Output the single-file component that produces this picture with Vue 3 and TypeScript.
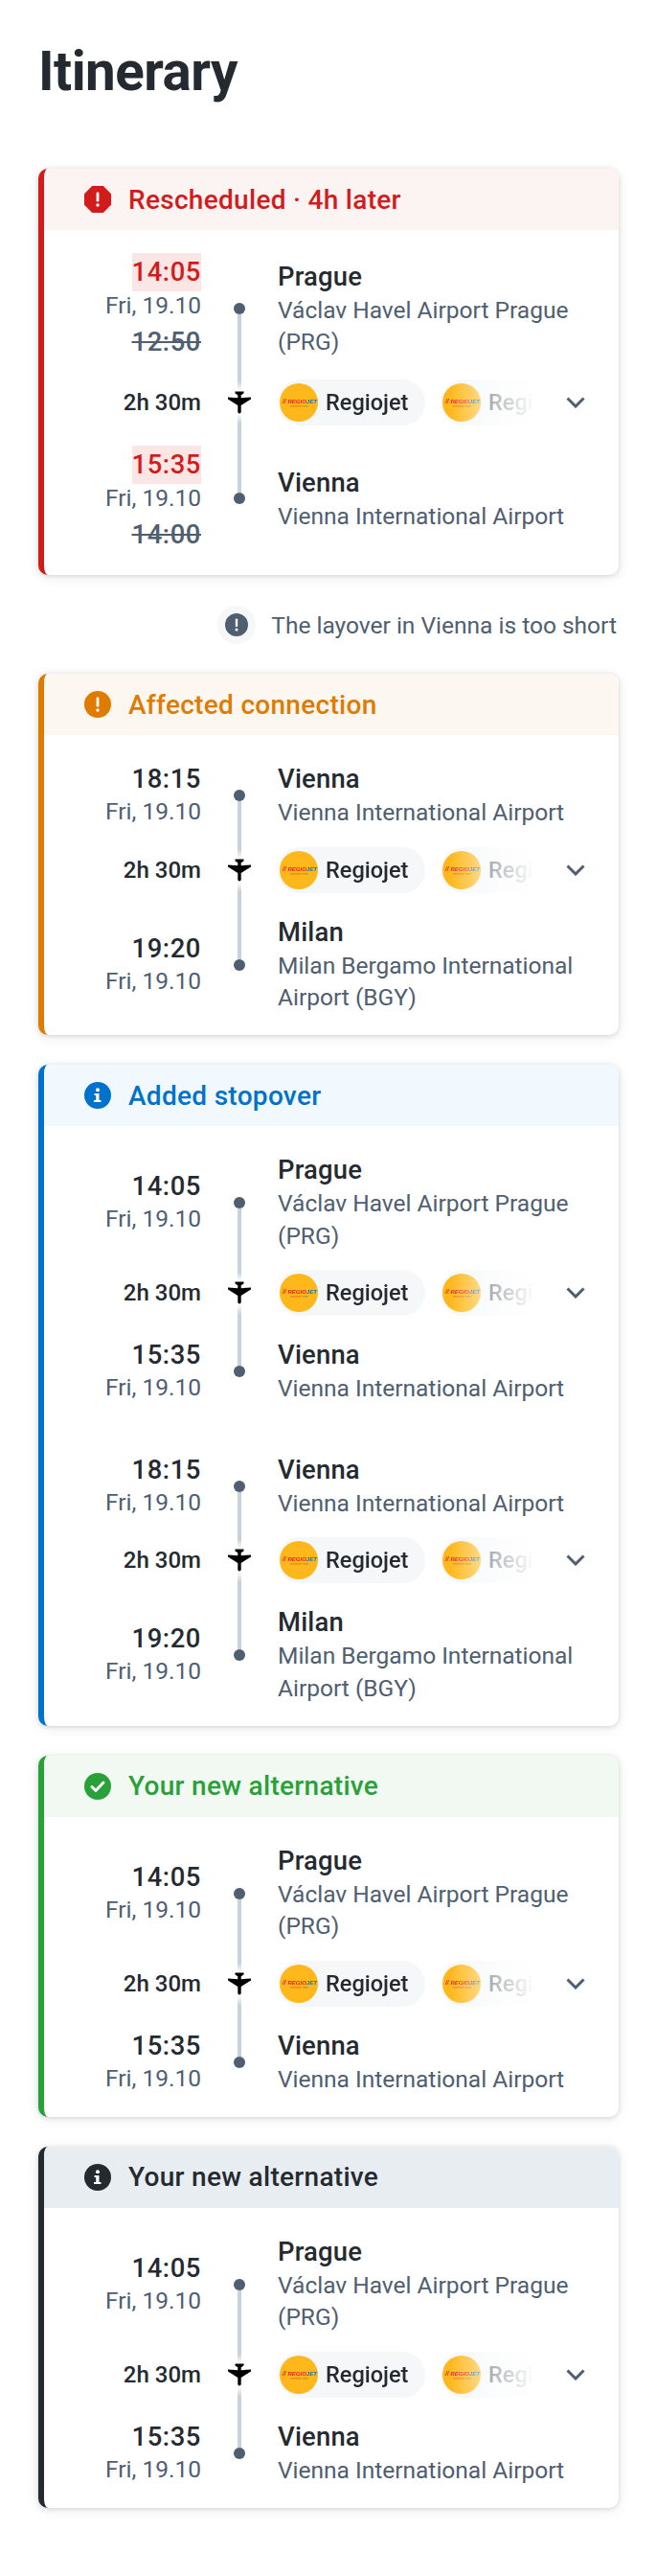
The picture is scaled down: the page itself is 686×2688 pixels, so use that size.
<script setup lang="ts">
interface Stop {
  time: string
  oldTime?: string
  city: string
  airport: string
}

interface Segment {
  from: Stop
  to: Stop
}

interface Card {
  tone: 'critical' | 'warning' | 'info' | 'success' | 'neutral'
  title: string
  segments: Segment[]
  note?: string
}

const prague: Stop = { time: '14:05', city: 'Prague', airport: 'Václav Havel Airport Prague (PRG)' }
const viennaArr: Stop = { time: '15:35', city: 'Vienna', airport: 'Vienna International Airport' }
const viennaDep: Stop = { time: '18:15', city: 'Vienna', airport: 'Vienna International Airport' }
const milan: Stop = { time: '19:20', city: 'Milan', airport: 'Milan Bergamo International Airport (BGY)' }

const cards: Card[] = [
  {
    tone: 'critical',
    title: 'Rescheduled · 4h later',
    note: 'The layover in Vienna is too short',
    segments: [
      {
        from: { ...prague, oldTime: '12:50' },
        to: { ...viennaArr, oldTime: '14:00' },
      },
    ],
  },
  { tone: 'warning', title: 'Affected connection', segments: [{ from: viennaDep, to: milan }] },
  {
    tone: 'info',
    title: 'Added stopover',
    segments: [
      { from: prague, to: viennaArr },
      { from: viennaDep, to: milan },
    ],
  },
  { tone: 'success', title: 'Your new alternative', segments: [{ from: prague, to: viennaArr }] },
  { tone: 'neutral', title: 'Your new alternative', segments: [{ from: prague, to: viennaArr }] },
]
</script>

<template>
  <main class="page">
    <h1 class="title">Itinerary</h1>
    <template v-for="card in cards" :key="card.tone">
      <section class="card" :class="card.tone">
        <header class="card-head">
          <svg class="status-icon" viewBox="0 0 28 28">
            <template v-if="card.tone === 'critical'">
              <polygon class="fill" points="8.2,0 19.8,0 28,8.2 28,19.8 19.8,28 8.2,28 0,19.8 0,8.2" />
              <rect x="12.6" y="6.5" width="2.8" height="10" rx="1.2" fill="#fff" />
              <circle cx="14" cy="20" r="1.7" fill="#fff" />
            </template>
            <template v-else>
              <circle class="fill" cx="14" cy="14" r="14" />
              <template v-if="card.tone === 'warning'">
                <rect x="12.6" y="6.5" width="2.8" height="10" rx="1.2" fill="#fff" />
                <circle cx="14" cy="20" r="1.7" fill="#fff" />
              </template>
              <path
                v-else-if="card.tone === 'success'"
                d="M8 14.5l4 4 8-8.5"
                fill="none"
                stroke="#fff"
                stroke-width="3"
                stroke-linecap="round"
                stroke-linejoin="round"
              />
              <template v-else>
                <circle cx="14" cy="8.2" r="2" fill="#fff" />
                <path d="M10.5 12h5v7h2v2h-7.5v-2h2.2v-5h-1.7z" fill="#fff" />
              </template>
            </template>
          </svg>
          <span class="card-title">{{ card.title }}</span>
        </header>

        <div class="card-body">
          <div v-for="(segment, i) in card.segments" :key="i" class="segment">
            <div
              v-for="(stop, s) in [segment.from, segment.to]"
              :key="s"
              class="stop"
              :style="{ order: s * 2 }"
            >
              <div class="times">
                <span class="time" :class="{ changed: stop.oldTime }">{{ stop.time }}</span>
                <span class="date">Fri, 19.10</span>
                <span v-if="stop.oldTime" class="old-time">{{ stop.oldTime }}</span>
              </div>
              <div class="track">
                <i class="line" :class="{ hidden: s === 0 }"></i>
                <i class="dot"></i>
                <i class="line" :class="{ hidden: s === 1 }"></i>
              </div>
              <div class="place">
                <div class="city">{{ stop.city }}</div>
                <div class="airport">{{ stop.airport }}</div>
              </div>
            </div>

            <div class="stop transit">
              <div class="duration">2h 30m</div>
              <div class="track">
                <i class="line line-up"></i>
                <svg class="plane" viewBox="0 0 24 24">
                  <path
                    d="M7.5 0.6h9v1.800l-2.800 1.900v3l10.300-0.900v2.100l-10.300 6.400v6.500c0 1-.8 2-1.700 2s-1.700-1-1.700-2v-6.500L0 8.500v-2.100l10.300 0.900v-3L7.500 2.400z"
                  />
                </svg>
                <i class="line line-down"></i>
              </div>
              <div class="transit-row">
                <div class="carriers">
                  <div v-for="n in 2" :key="n" class="carrier">
                    <svg class="logo" viewBox="0 0 40 40">
                      <circle cx="20" cy="20" r="20" fill="#ffb81c" />
                      <text x="3" y="20.500" class="logo-a">//</text>
                      <text x="8.500" y="20.500" class="logo-b">REGIO<tspan fill="#1c6fb5">JET</tspan></text>
                      <rect x="11" y="23.500" width="12" height="0.800" fill="#e2621b" />
                      <rect x="24" y="23.500" width="6" height="0.800" fill="#7f8a3a" />
                    </svg>
                    <span class="carrier-name">Regiojet</span>
                  </div>
                </div>
                <svg class="chevron" viewBox="0 0 20 12">
                  <path d="M1.500 1.500L10 10l8.500-8.500" />
                </svg>
              </div>
            </div>
          </div>
        </div>
      </section>

      <div v-if="card.note" class="note">
        <span class="note-icon">
          <svg viewBox="0 0 24 24">
            <circle cx="12" cy="12" r="12" fill="#4f5e71" />
            <rect x="10.800" y="5.500" width="2.400" height="8.500" rx="1" fill="#fff" />
            <circle cx="12" cy="17" r="1.500" fill="#fff" />
          </svg>
        </span>
        <span>{{ card.note }}</span>
      </div>
    </template>
  </main>
</template>

<style>
body {
  background: #fff;
}
</style>

<style scoped>
.page {
  box-sizing: border-box;
  width: 686px;
  height: 2688px;
  padding: 43px 40px 0;
  font-family: Roboto, "Liberation Sans", sans-serif;
  color: #252a31;
}

.title {
  margin: 0 0 68px;
  font-size: 56.5px;
  line-height: 65px;
  font-weight: 700;
  letter-spacing: -0.5px;
}

.card {
  display: flow-root;
  margin-bottom: 31px;
  border-left: 6px solid var(--tone);
  border-radius: 10px;
  background: #fff;
  overflow: hidden;
  box-shadow: 0 1px 5px rgba(37, 42, 49, 0.16), 0 2px 14px rgba(37, 42, 49, 0.08);
}

.critical { --tone: #d21c1c; --tint: #fcf3f3; }
.warning { --tone: #df7b00; --tint: #fdf7f2; }
.info { --tone: #0172cb; --tint: #f1f8fe; }
.success { --tone: #28a138; --tint: #f2f8f2; }
.neutral { --tone: #252a31; --tint: #e8edf1; }

.card-head {
  display: flex;
  align-items: center;
  height: 64px;
  padding-left: 42px;
  background: var(--tint);
}

.status-icon {
  width: 28px;
  height: 28px;
  margin-right: 18px;
  flex: none;
}

.fill {
  fill: var(--tone);
}

.card-title {
  color: var(--tone);
  font-size: 28px;
  font-weight: 500;
  letter-spacing: 0.3px;
}

.card-body {
  display: flex;
  flex-direction: column;
  gap: 51px;
  padding: 29px 0 22.5px;
}

.critical .card-body {
  padding-bottom: 25px;
}

.segment {
  display: flex;
  flex-direction: column;
}

.stop {
  display: grid;
  grid-template-columns: 164px 80px 1fr;
  align-items: center;
}

.times {
  display: flex;
  flex-direction: column;
  align-items: flex-end;
}

.critical .stop:first-child .times {
  margin-top: -5px;
}

.time {
  font-size: 27.4px;
  line-height: 34px;
  font-weight: 500;
  letter-spacing: 0.6px;
}

.changed {
  padding: 3px 0;
  color: #d21c1c;
  background: #fbe6e6;
}

.date {
  font-size: 24.5px;
  line-height: 34px;
  color: #4f5e71;
}

.changed + .date {
  line-height: 30px;
}

.old-time {
  padding-top: 6px;
  font-size: 27.4px;
  line-height: 34px;
  font-weight: 500;
  letter-spacing: 0.6px;
  color: #4f5e71;
  text-decoration: line-through;
}

.track {
  align-self: stretch;
  display: flex;
  flex-direction: column;
  align-items: center;
}

.line {
  flex: 1;
  width: 4px;
  background: #c9d2db;
}

.hidden {
  visibility: hidden;
}

.dot {
  flex: none;
  width: 12px;
  height: 12px;
  border-radius: 50%;
  background: #4f5e71;
}

.critical .place {
  padding-top: 2px;
}

.city {
  font-size: 27.4px;
  line-height: 35px;
  font-weight: 500;
  letter-spacing: 0.2px;
}

.airport {
  padding-right: 26px;
  font-size: 24.5px;
  line-height: 33.5px;
  color: #4f5e71;
}

.transit {
  order: 1;
}

.duration {
  justify-self: end;
  padding-bottom: 5px;
  font-size: 24px;
  font-weight: 500;
}

.critical .duration {
  padding: 1px 0 0;
}

.line-up {
  flex: none;
  height: 31px;
  background: linear-gradient(to bottom, #c9d2db 70%, #fff);
}

.critical .line-up {
  height: 34px;
}

.line-down {
  background: linear-gradient(to top, #c9d2db 70%, #fff);
}

.plane {
  flex: none;
  width: 24px;
  height: 24px;
  fill: #000;
}

.transit-row {
  display: flex;
  align-items: center;
  padding: 19px 0 24px;
}

.critical .transit-row {
  padding: 22px 0 21px;
}

.carriers {
  display: flex;
  gap: 16px;
  width: 268px;
  overflow: hidden;
  mask-image: linear-gradient(to right, #000 180px, rgba(0, 0, 0, 0.35) 225px, transparent 268px);
}

.carrier {
  display: flex;
  align-items: center;
  flex: none;
  gap: 8px;
  width: 154px;
  height: 48px;
  padding: 0 2px;
  box-sizing: border-box;
  border-radius: 24px;
  background: #f5f7f9;
}

.logo {
  flex: none;
  width: 40px;
  height: 40px;
}

.logo-a {
  font: italic 700 6.5px "Liberation Sans", sans-serif;
  fill: #e5202e;
}

.logo-b {
  font: italic 700 6px "Liberation Sans", sans-serif;
  fill: #e5202e;
}

.carrier-name {
  font-size: 23.5px;
  font-weight: 500;
}

.chevron {
  flex: none;
  width: 20px;
  height: 12px;
  margin-left: 33px;
  fill: none;
  stroke: #4f5e71;
  stroke-width: 3;
}

.note {
  display: flex;
  align-items: center;
  justify-content: flex-end;
  gap: 16px;
  height: 40px;
  margin: 32px 2px 31px 0;
  font-size: 24.5px;
  color: #4f5e71;
}

.note-icon {
  display: flex;
  align-items: center;
  justify-content: center;
  width: 40px;
  height: 40px;
  border-radius: 50%;
  background: #f5f7f9;
}

.note-icon svg {
  width: 24px;
  height: 24px;
}
</style>
